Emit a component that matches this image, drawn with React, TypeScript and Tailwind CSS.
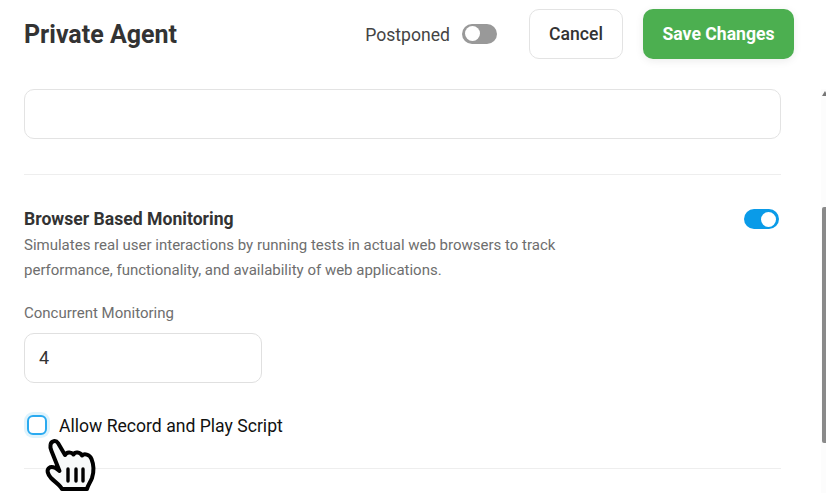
function Toggle({ on }: { on: boolean }) {
  return (
    <div
      className={`flex h-[20px] w-[35px] items-center rounded-full px-[3px] ${
        on ? "justify-end bg-[#0a9be8]" : "justify-start bg-[#999999]"
      }`}
    >
      <div className="h-[15px] w-[15px] rounded-full bg-white" />
    </div>
  );
}

function HandCursor() {
  return (
    <svg
      className="absolute left-[44px] top-[436px]"
      width="54"
      height="57"
      viewBox="0 0 54 57"
      fill="none"
    >
      <path
        d="M6.5 9C7 4.5 12 4 14 7L21 19C22.5 16 27 15.5 29.5 18.5C31 15.5 36 16 38 19.5C40 17.5 45.5 18 47.5 23C49.5 28 50 36 48 42C46.5 46 44 49 43 53H18C16 49 11 46 7 42C3.5 38 2.5 34 5 32C7.5 30 12 32 15.5 35L7.5 15C6.5 12.5 6 11 6.5 9Z"
        fill="#f7f9f9"
        stroke="#000000"
        strokeWidth="4"
        strokeLinejoin="round"
      />
      <path d="M24 33V45M32 33V45M39 33V45" stroke="#000000" strokeWidth="3.4" strokeLinecap="round" />
    </svg>
  );
}

export default function App() {
  return (
    <div className="relative h-[493px] w-[826px] overflow-hidden bg-white font-['Roboto',sans-serif]">
      <header className="flex h-[68px] items-center pl-[24px] pr-[32px]">
        <h1 className="text-[25px] font-bold leading-none text-[#333333]">Private Agent</h1>
        <div className="ml-auto flex items-center gap-[12px]">
          <span className="pt-[2px] text-[17.6px] text-[#444444]">Postponed</span>
          <Toggle on={false} />
        </div>
        <button className="ml-[32px] h-[50px] w-[94px] rounded-[10px] border border-[#e3e3e3] bg-white text-[17.6px] font-medium text-[#333333]">
          Cancel
        </button>
        <button className="ml-[20px] h-[50px] w-[151px] rounded-[10px] bg-[#4caf50] text-[17.6px] font-bold text-white shadow-[0_2px_8px_rgba(0,0,0,0.08)]">
          Save Changes
        </button>
      </header>

      <main className="w-[781px] pl-[24px] pt-[21px]">
        <div className="h-[50px] rounded-[10px] border border-[#e3e3e3]" />
        <div className="mt-[35px] border-t border-[#eeeeee]" />

        <section className="mt-[33px] flex items-start justify-between pr-[2px]">
          <div>
            <h2 className="text-[17.6px] font-bold leading-[22px] text-[#333333]">Browser Based Monitoring</h2>
            <p className="mt-[3px] w-[560px] text-[15px] leading-[25px] text-[#6e6e6e]">
              Simulates real user interactions by running tests in actual web browsers to track performance,
              functionality, and availability of web applications.
            </p>
          </div>
          <div className="mt-[1px]">
            <Toggle on={true} />
          </div>
        </section>

        <label className="mt-[20px] block text-[15px] leading-[20px] text-[#6e6e6e]">Concurrent Monitoring</label>
        <div className="mt-[10px] flex h-[50px] w-[238px] items-center rounded-[10px] border border-[#e0e0e0] px-[14px] pb-[2px] text-[18px] text-[#333333]">
          4
        </div>

        <div className="ml-[3px] mt-[32px] flex items-center gap-[12px]">
          <div className="h-[20px] w-[20px] rounded-[6px] border-2 border-[#2aaaf0] bg-white shadow-[0_0_0_3px_rgba(26,167,236,0.14)]" />
          <span className="pt-[2px] text-[17.6px] leading-[18px] text-[#111111]">Allow Record and Play Script</span>
        </div>

        <div className="mt-[33px] border-t border-[#eeeeee]" />
      </main>

      {/* scrollbar */}
      <div className="absolute right-0 top-[89px] h-[404px] w-[5px] bg-[#fcfcfc]">
        <div className="absolute left-[1px] top-[118px] h-[236px] w-[4px] rounded-l-[2px] bg-[#8a8a8a]" />
        <div className="absolute left-[1px] top-[2px] h-0 w-0 border-x-[3px] border-b-[5px] border-x-transparent border-b-[#777777]" />
      </div>

      <HandCursor />
    </div>
  );
}
